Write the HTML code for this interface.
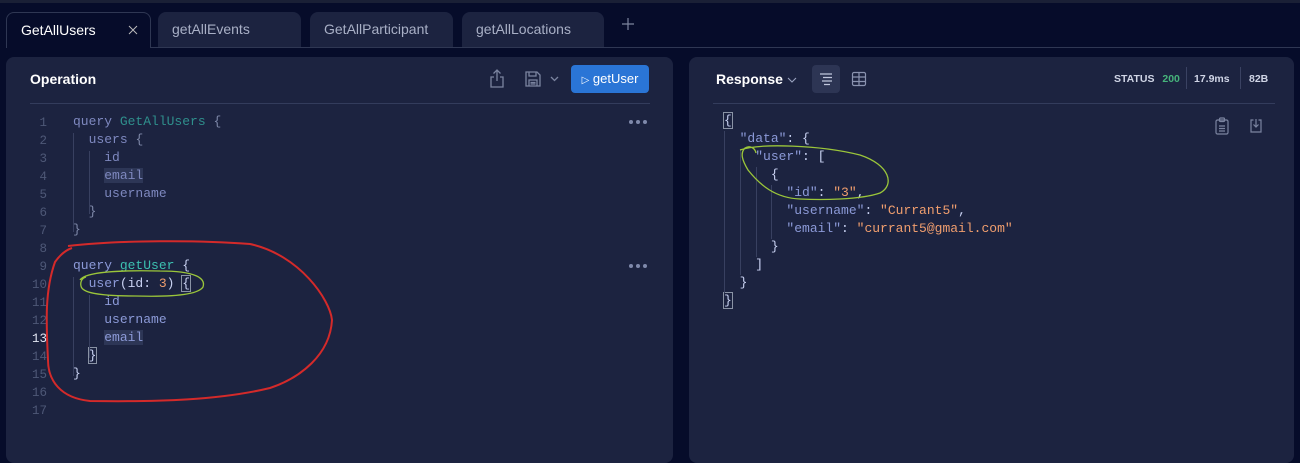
<!DOCTYPE html>
<html><head><meta charset="utf-8"><style>
*{margin:0;padding:0;box-sizing:border-box}
body{width:1300px;height:453px;background:#060c2a;font-family:"Liberation Sans",sans-serif;position:relative;overflow:hidden;color:#fff}
.topline{position:absolute;left:0;top:0;width:1300px;height:3px;background:#1a2036}
.tab{position:absolute;top:12px;height:36px;border-radius:8px 8px 0 0;background:#1c2340;color:#a9b0c6;font-size:14px;line-height:34px;padding-left:14px}
.tab.active{background:#060c2a;border:1px solid #2f3753;border-bottom:none;color:#fff}
.tabline{position:absolute;top:47px;left:0;width:1300px;height:1px;background:#2f3753}
.panel{position:absolute;top:57px;bottom:-10px;background:#1c2340;border-radius:8px}
.mono{font-family:"Liberation Mono","DejaVu Sans Mono",monospace;font-size:13px}
.ln{position:absolute;left:0;width:47px;text-align:right;color:#4e5877;font-size:12.5px}
.code{position:absolute;white-space:pre}
.k{color:#8c9ad8}.n{color:#3aa8a0}.f{color:#7e88bf}.p{color:#7e88a8}.w{color:#c9d2f2}.o{color:#f09e6e}
.dots{position:absolute;display:flex;gap:3px}
.dots i{width:4px;height:4px;border-radius:50%;background:#7f89ab}
</style></head><body>
<div class="topline"></div>
<div class="tab active" style="left:6px;width:145px">GetAllUsers<svg style="position:absolute;left:121px;top:12px" width="10" height="10" viewBox="0 0 10 10" stroke="#bbb" stroke-width="1"><path d="M1 1l8 8M9 1L1 9"/></svg></div>
<div class="tab" style="left:158px;width:143px">getAllEvents</div>
<div class="tab" style="left:310px;width:143px">GetAllParticipant</div>
<div class="tab" style="left:462px;width:142px">getAllLocations</div>
<svg style="position:absolute;left:622px;top:18px" width="12" height="12" viewBox="0 0 12 12" stroke="#7d859e" stroke-width="1.2"><path d="M6 0v12M0 6h12"/></svg>
<div class="tabline" style="left:151px"></div>

<div class="panel" style="left:6px;width:667px">
  <div style="position:absolute;left:24px;top:14px;font-weight:bold;font-size:14px">Operation</div>
  <svg style="position:absolute;left:483px;top:12px" width="16" height="20" viewBox="0 0 16 20" fill="none" stroke="#7b84a0" stroke-width="1.3"><path d="M8 1v11M4.5 4.5L8 1l3.5 3.5M5 8H2v10h12V8h-3"/></svg>
  <svg style="position:absolute;left:518px;top:13px" width="18" height="18" viewBox="0 0 18 18" fill="none" stroke="#7b84a0" stroke-width="1.3"><path d="M2 2h11l3 3v11H2z M5 2v4h7V2 M5 10h8v6H5z M6.5 12.5h5M6.5 14h5"/></svg>
  <svg style="position:absolute;left:544px;top:19px" width="9" height="6" viewBox="0 0 9 6" fill="none" stroke="#7b84a0" stroke-width="1.3"><path d="M1 1l3.5 3.5L8 1"/></svg>
  <div style="position:absolute;left:565px;top:8px;width:78px;height:28px;background:#2a75d6;border-radius:4px;font-size:13px;line-height:28px;text-align:center;color:#fff"><span style="font-size:10px">▷</span> getUser</div>
  <div style="position:absolute;left:24px;top:46px;width:620px;height:1px;background:#333c5c"></div>
</div>
<div class="panel" style="left:689px;width:605px">
  <div style="position:absolute;left:27px;top:14px;font-weight:bold;font-size:14px">Response</div>
  <svg style="position:absolute;left:98px;top:20px" width="10" height="6" viewBox="0 0 10 6" fill="none" stroke="#9aa3c0" stroke-width="1.1"><path d="M1 1l4 4 4-4"/></svg>
  <div style="position:absolute;left:123px;top:8px;width:28px;height:28px;background:#2d3554;border-radius:4px"></div>
  <svg style="position:absolute;left:129px;top:14px" width="16" height="16" viewBox="0 0 16 16" stroke="#c0c6dc" stroke-width="1.3"><path d="M2 3h12M5 6.5h9M4 10h10M6 13.5h6"/></svg>
  <svg style="position:absolute;left:162px;top:14px" width="16" height="16" viewBox="0 0 16 16" fill="none" stroke="#8a93b0" stroke-width="1.2"><rect x="1.5" y="1.5" width="13" height="13" rx="1.5"/><path d="M1.5 6h13M1.5 10.5h13M8 1.5v13"/></svg>
  <div style="position:absolute;left:425px;top:16px;font-size:10.5px;font-weight:bold;color:#d0d5e6">STATUS <span style="color:#46b37b;margin-left:5px">200</span></div>
  <div style="position:absolute;left:497px;top:10px;width:1px;height:22px;background:#3a4262"></div>
  <div style="position:absolute;left:505px;top:16px;font-size:10.5px;color:#d0d5e6;font-weight:bold">17.9ms</div>
  <div style="position:absolute;left:551px;top:10px;width:1px;height:22px;background:#3a4262"></div>
  <div style="position:absolute;left:560px;top:16px;font-size:10.5px;color:#d0d5e6;font-weight:bold">82B</div>
  <div style="position:absolute;left:24px;top:46px;width:562px;height:1px;background:#333c5c"></div>
  <svg style="position:absolute;left:526px;top:60px" width="14" height="18" viewBox="0 0 14 18" fill="none" stroke="#7b84a0" stroke-width="1.2"><rect x="1" y="3" width="12" height="14" rx="1.5"/><rect x="4.5" y="1" width="5" height="3.5" rx="1"/><path d="M4 9h6M4 11.5h6M4 14h6"/></svg>
  <svg style="position:absolute;left:560px;top:61px" width="14" height="15" viewBox="0 0 14 15" fill="none" stroke="#7b84a0" stroke-width="1.2"><path d="M4.5 2H2v12h10V2H9.5M7 1v8M4.5 6.5L7 9l2.5-2.5"/></svg>
</div>

<div class="mono">
<div class="ln" style="top:114px;line-height:18px">1<br>2<br>3<br>4<br>5<br>6<br>7<br>8<br>9<br>10<br>11<br>12<br><span style="color:#e2e6f2">13</span><br>14<br>15<br>16<br>17</div>
<div class="code" style="left:73px;top:113px;line-height:18px"><span class="f">query</span> <span class="n" style="color:#2f8f8c">GetAllUsers</span> <span class="p">{</span>
  <span class="f">users</span> <span class="p">{</span>
    <span class="f">id</span>
    <span class="f" style="background:#2d3656">email</span>
    <span class="f">username</span>
  <span class="p">}</span>
<span class="p">}</span>

<span class="k">query</span> <span class="n" style="color:#3cc0b0">getUser</span> <span class="w">{</span>
  <span class="k">user</span><span class="w">(id: </span><span class="o">3</span><span class="w">) </span><span class="w" style="outline:1px solid #8a93a5">{</span>
    <span class="k">id</span>
    <span class="k">username</span>
    <span class="k" style="background:#2d3656">email</span>
  <span class="w" style="outline:1px solid #8a93a5">}</span>
<span class="w">}</span>
</div>
<div style="position:absolute;left:73px;top:133px;width:1px;height:99px;background:#384060"></div>
<div style="position:absolute;left:89px;top:151px;width:1px;height:63px;background:#384060"></div>
<div style="position:absolute;left:73px;top:277px;width:1px;height:99px;background:#384060"></div>
<div style="position:absolute;left:89px;top:295px;width:1px;height:63px;background:#384060"></div>

<div class="code" style="left:724px;top:112px;line-height:18px"><span class="w" style="outline:1px solid #8a93a5">{</span>
  <span class="k">"data"</span><span class="w">: {</span>
    <span class="k">"user"</span><span class="w">: [</span>
      <span class="w">{</span>
        <span class="k">"id"</span><span class="w">: </span><span class="o">"3"</span><span class="w">,</span>
        <span class="k">"username"</span><span class="w">: </span><span class="o">"Currant5"</span><span class="w">,</span>
        <span class="k">"email"</span><span class="w">: </span><span class="o">"currant5@gmail.com"</span>
      <span class="w">}</span>
    <span class="w">]</span>
  <span class="w">}</span>
<span class="w" style="outline:1px solid #8a93a5">}</span></div>
<div style="position:absolute;left:724px;top:131px;width:1px;height:162px;background:#384060"></div>
<div style="position:absolute;left:740px;top:149px;width:1px;height:126px;background:#384060"></div>
<div style="position:absolute;left:756px;top:167px;width:1px;height:90px;background:#384060"></div>
<div style="position:absolute;left:771px;top:185px;width:1px;height:54px;background:#384060"></div>
</div>
<div class="dots" style="left:629px;top:120px"><i></i><i></i><i></i></div>
<div class="dots" style="left:629px;top:264px"><i></i><i></i><i></i></div>

<svg style="position:absolute;left:0;top:0" width="1300" height="453" fill="none">
<path d="M68 246 C120 240 200 240 250 244 C300 255 330 300 332 320 C330 355 300 378 270 388 C220 400 160 402 90 401 C60 398 48 380 48 360 C46 320 45 290 55 262 C60 255 66 250 72 248" stroke="#d42a2a" stroke-width="2"/>
<path d="M80 280 C85 272 120 270 160 271 C195 271 206 278 203 287 C198 295 170 297 135 296 C100 296 82 293 81 286 C80 282 82 278 86 277" stroke="#9bc63a" stroke-width="1.3"/>
<path d="M740 150 C760 143 820 145 860 155 C890 165 895 185 880 193 C860 200 820 200 800 199 C775 198 760 185 748 170 C742 160 740 153 745 148 C750 145 755 148 756 153" stroke="#9bc63a" stroke-width="1.3"/>
</svg>
</body></html>
